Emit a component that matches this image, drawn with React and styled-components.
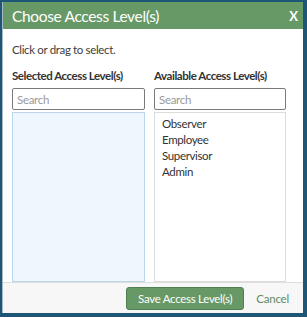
import React from "react";
import styled, { createGlobalStyle } from "styled-components";

const GlobalStyle = createGlobalStyle`
  html, body {
    margin: 0;
    padding: 0;
    background: #1d5677;
  }
  body {
    font-family: "Source Sans Pro", Lato, "Noto Sans", sans-serif;
  }
`;

const Frame = styled.div`
  width: 307px;
  height: 317px;
  box-sizing: border-box;
  padding: 2px 4px 4px 2px;
  background: #1d5677;
`;

const Dialog = styled.div`
  height: 100%;
  display: flex;
  flex-direction: column;
  background: white;
  border-left: 1px solid #a9bac5;
`;

const Header = styled.div`
  flex: none;
  height: 27px;
  display: flex;
  align-items: center;
  justify-content: space-between;
  padding: 0 5px 0 9px;
  background: #679967;
  color: white;
`;

const Title = styled.h2`
  margin: 0;
  font-size: 15.5px;
  font-weight: 400;
  letter-spacing: -0.35px;
`;

const Close = styled.button`
  border: none;
  background: none;
  color: white;
  font: inherit;
  font-size: 13px;
  font-weight: 700;
  padding: 0;
`;

const Body = styled.div`
  flex: 1;
  padding: 14px 0 0 9px;
  display: flex;
  flex-direction: column;
`;

const Hint = styled.p`
  margin: 0 0 12px;
  font-size: 11.5px;
  line-height: 14px;
  letter-spacing: -0.35px;
  color: #3d3d3d;
`;

const Columns = styled.div`
  flex: 1;
  display: grid;
  grid-template-columns: 133px 132px;
  column-gap: 9px;
`;

const Column = styled.div`
  display: flex;
  flex-direction: column;
`;

const Label = styled.div`
  font-size: 11.5px;
  line-height: 14px;
  font-weight: 700;
  letter-spacing: -0.45px;
  color: #333;
  margin-bottom: 5px;
`;

const Search = styled.input`
  box-sizing: border-box;
  height: 22px;
  width: 100%;
  margin: 0 0 2px;
  border: 1px solid #7a7a7a;
  border-radius: 2px;
  padding: 0 4px;
  font: inherit;
  font-size: 11.5px;
  letter-spacing: -0.3px;
  &::placeholder {
    color: #999;
  }
`;

const List = styled.ul`
  flex: 1;
  margin: 0;
  padding: 3px 7px;
  list-style: none;
  border: 1px solid ${({ $selected }) => ($selected ? "#bcd5ea" : "#dcdcdc")};
  background: ${({ $selected }) => ($selected ? "#eff7fe" : "white")};
`;

const Item = styled.li`
  font-size: 11.5px;
  line-height: 16px;
  letter-spacing: -0.35px;
  color: #333;
`;

const Footer = styled.div`
  flex: none;
  height: 30px;
  display: flex;
  align-items: center;
  justify-content: flex-end;
  gap: 12px;
  padding: 0 14px 0 0;
  border-top: 1px solid #dedede;
  background: #f7f7f7;
`;

const SaveButton = styled.button`
  width: 118px;
  height: 23px;
  padding: 0;
  border: 1px solid #4f7f52;
  border-radius: 3px;
  background: #679967;
  color: white;
  font: inherit;
  font-size: 11.5px;
  letter-spacing: -0.3px;
`;

const Cancel = styled.a`
  color: #5e8b60;
  font-size: 11.5px;
  letter-spacing: -0.2px;
`;

const available = ["Observer", "Employee", "Supervisor", "Admin"];

export default function App() {
  return (
    <>
      <GlobalStyle />
      <Frame>
        <Dialog>
          <Header>
            <Title>Choose Access Level(s)</Title>
            <Close>X</Close>
          </Header>
          <Body>
            <Hint>Click or drag to select.</Hint>
            <Columns>
              <Column>
                <Label>Selected Access Level(s)</Label>
                <Search placeholder="Search" />
                <List $selected />
              </Column>
              <Column>
                <Label>Available Access Level(s)</Label>
                <Search placeholder="Search" />
                <List>
                  {available.map((a) => (
                    <Item key={a}>{a}</Item>
                  ))}
                </List>
              </Column>
            </Columns>
          </Body>
          <Footer>
            <SaveButton>Save Access Level(s)</SaveButton>
            <Cancel>Cancel</Cancel>
          </Footer>
        </Dialog>
      </Frame>
    </>
  );
}
